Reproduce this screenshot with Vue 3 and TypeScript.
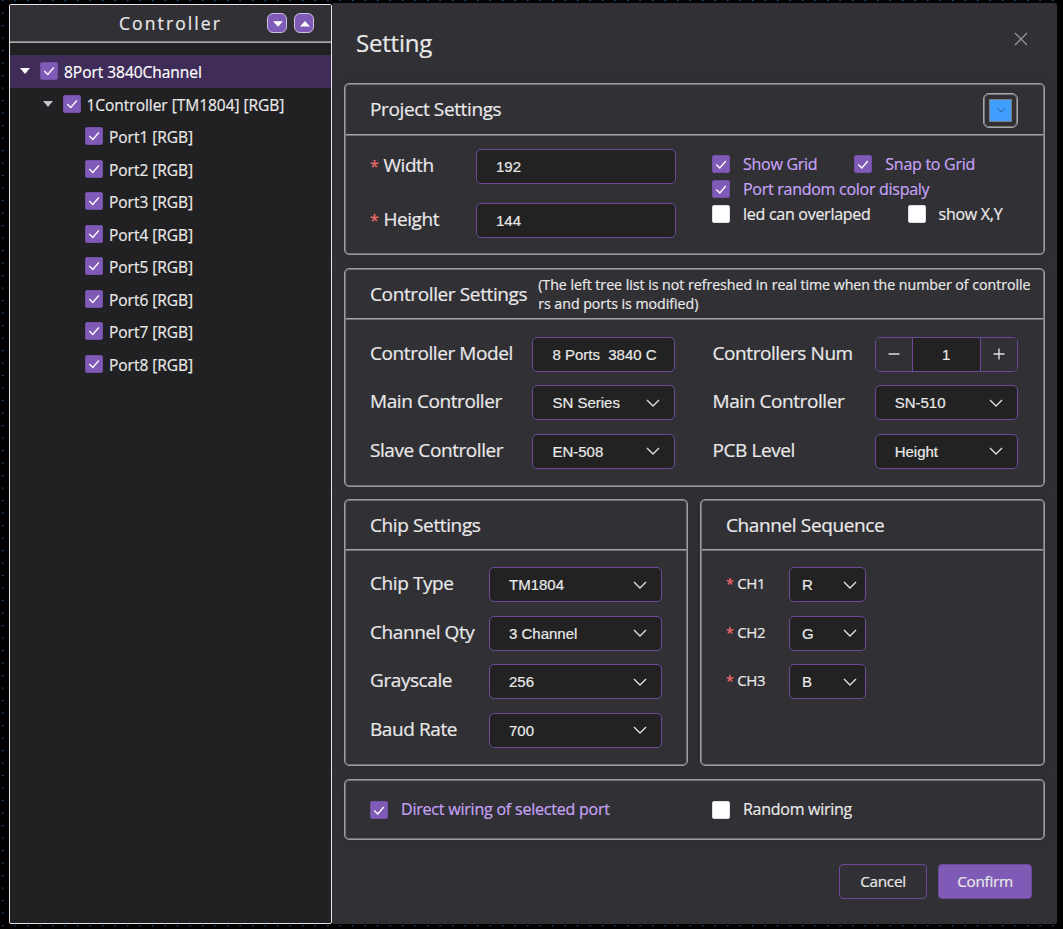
<template>
  <div class="page">
    <!-- Controller tree -->
    <aside class="sidebar">
      <header class="sidebar-head">
        <h2>Controller</h2>
        <div class="head-buttons">
          <button class="mini-btn">
            <svg viewBox="0 0 20 20" width="20" height="20">
              <path d="M5 7.2h10l-5 5.6z" fill="#fff" />
            </svg>
          </button>
          <button class="mini-btn">
            <svg viewBox="0 0 20 20" width="20" height="20">
              <path d="M5 12.6h10l-5-5.6z" fill="#fff" />
            </svg>
          </button>
        </div>
      </header>

      <ul class="tree">
        <li
          v-for="node in nodes"
          :key="node.label"
          class="node"
          :class="[`node--level${node.level}`, { 'node--active': node.active }]"
        >
          <svg v-if="node.level < 3" class="caret" viewBox="0 0 10 6" width="10" height="6">
            <path d="M0 0h10L5 6z" fill="currentColor" />
          </svg>
          <span class="box box--on">
            <svg viewBox="0 0 18 18" width="18" height="18">
              <path d="M4.3 9l3.5 3.5 6-7" />
            </svg>
          </span>
          <span class="node-label">{{ node.label }}</span>
        </li>
      </ul>
    </aside>

    <!-- Settings dialog -->
    <main class="dialog">
      <header class="dialog-head">
        <h1>Setting</h1>
        <svg class="close" viewBox="0 0 14 14" width="14" height="14">
          <path d="M1 1l12 12M13 1L1 13" />
        </svg>
      </header>

      <section class="card card--project">
        <div class="card-head">
          <h3>Project Settings</h3>
          <button class="toggle">
            <span class="toggle-inner">
              <svg viewBox="0 0 10 6" width="10" height="6"><path d="M1 1l4 4 4-4" /></svg>
            </span>
          </button>
        </div>
        <div class="project-body">
          <div class="size-fields">
            <div v-for="f in sizeFields" :key="f.label" class="size-row">
              <label class="label"><i class="star">*</i>{{ f.label }}</label>
              <div class="control">{{ f.value }}</div>
            </div>
          </div>
          <div class="checks">
            <div v-for="(row, i) in checkRows" :key="i" class="check-row">
              <label v-for="c in row" :key="c.label" class="check" :class="{ 'check--on': c.on }">
                <span class="box" :class="{ 'box--on': c.on }">
                  <svg v-if="c.on" viewBox="0 0 18 18" width="18" height="18">
                    <path d="M4.3 9.5l3.5 3.5 6-7" />
                  </svg>
                </span>
                <span>{{ c.label }}</span>
              </label>
            </div>
          </div>
        </div>
      </section>

      <section class="card card--controller">
        <div class="card-head">
          <h3>Controller Settings</h3>
          <p class="hint">
            (The left tree list is not refreshed in real time when the number of controlle<br />rs and
            ports is modified)
          </p>
        </div>
        <div class="controller-body">
          <div v-for="f in controllerFields" :key="f.id" class="field">
            <label class="label">{{ f.label }}</label>
            <div v-if="f.kind === 'number'" class="control stepper">
              <span class="step">
                <svg viewBox="0 0 12 12" width="12" height="12"><path d="M0.5 6h11" /></svg>
              </span>
              <span class="step-value">{{ f.value }}</span>
              <span class="step">
                <svg viewBox="0 0 12 12" width="12" height="12"><path d="M0.5 6h11M6 0.5v11" /></svg>
              </span>
            </div>
            <div v-else class="control">
              <span class="value">{{ f.value }}</span>
              <svg v-if="f.kind === 'select'" class="chevron" viewBox="0 0 14 8" width="14" height="8">
                <path d="M1 1l6 6 6-6" />
              </svg>
            </div>
          </div>
        </div>
      </section>

      <div class="split">
        <section class="card card--chip">
          <div class="card-head"><h3>Chip Settings</h3></div>
          <div class="rows">
            <div v-for="f in chipFields" :key="f.label" class="field">
              <label class="label">{{ f.label }}</label>
              <div class="control">
                <span class="value">{{ f.value }}</span>
                <svg class="chevron" viewBox="0 0 14 8" width="14" height="8">
                  <path d="M1 1l6 6 6-6" />
                </svg>
              </div>
            </div>
          </div>
        </section>

        <section class="card card--channel">
          <div class="card-head"><h3>Channel Sequence</h3></div>
          <div class="rows">
            <div v-for="f in channels" :key="f.label" class="field">
              <label class="label label--small"><i class="star">*</i>{{ f.label }}</label>
              <div class="control">
                <span class="value">{{ f.value }}</span>
                <svg class="chevron" viewBox="0 0 14 8" width="14" height="8">
                  <path d="M1 1l6 6 6-6" />
                </svg>
              </div>
            </div>
          </div>
        </section>
      </div>

      <section class="card card--wiring">
        <label class="check check--on">
          <span class="box box--on">
            <svg viewBox="0 0 18 18" width="18" height="18"><path d="M4.3 9.5l3.5 3.5 6-7" /></svg>
          </span>
          <span class="check-text">Direct wiring of selected port</span>
        </label>
        <label class="check">
          <span class="box"></span>
          <span class="check-text">Random wiring</span>
        </label>
      </section>

      <footer class="actions">
        <button class="btn btn--cancel">Cancel</button>
        <button class="btn btn--confirm">Confirm</button>
      </footer>
    </main>
  </div>
</template>

<script setup lang="ts">
interface TreeNode {
  label: string
  level: 1 | 2 | 3
  active?: boolean
}

interface Check {
  label: string
  on: boolean
}

interface Field {
  id: string
  label: string
  value: string
  kind: 'text' | 'select' | 'number'
}

const ports: TreeNode[] = Array.from({ length: 8 }, (_, i) => ({
  label: `Port${i + 1} [RGB]`,
  level: 3,
}))

const nodes: TreeNode[] = [
  { label: '8Port 3840Channel', level: 1, active: true },
  { label: '1Controller [TM1804] [RGB]', level: 2 },
  ...ports,
]

const sizeFields = [
  { label: 'Width', value: '192' },
  { label: 'Height', value: '144' },
]

const checkRows: Check[][] = [
  [
    { label: 'Show Grid', on: true },
    { label: 'Snap to Grid', on: true },
  ],
  [{ label: 'Port random color dispaly', on: true }],
  [
    { label: 'led can overlaped', on: false },
    { label: 'show X,Y', on: false },
  ],
]

const controllerFields: Field[] = [
  { id: 'model', label: 'Controller Model', value: '8 Ports  3840 C', kind: 'text' },
  { id: 'count', label: 'Controllers Num', value: '1', kind: 'number' },
  { id: 'series', label: 'Main Controller', value: 'SN Series', kind: 'select' },
  { id: 'main', label: 'Main Controller', value: 'SN-510', kind: 'select' },
  { id: 'slave', label: 'Slave Controller', value: 'EN-508', kind: 'select' },
  { id: 'pcb', label: 'PCB Level', value: 'Height', kind: 'select' },
]

const chipFields = [
  { label: 'Chip Type', value: 'TM1804' },
  { label: 'Channel Qty', value: '3 Channel' },
  { label: 'Grayscale', value: '256' },
  { label: 'Baud Rate', value: '700' },
]

const channels = [
  { label: 'CH1', value: 'R' },
  { label: 'CH2', value: 'G' },
  { label: 'CH3', value: 'B' },
]
</script>

<style>
body {
  background: #000;
}
</style>

<style scoped>
* {
  box-sizing: border-box;
}

.page {
  display: flex;
  width: 1063px;
  height: 929px;
  overflow: hidden;
  padding: 3px 0 0 9px;
  background-color: #000;
  background-image: radial-gradient(circle at 2.5px 0.5px, #164a78 0.8px, transparent 1.1px);
  background-size: 12.5px 12.5px;
  font-family: 'Open Sans', 'Noto Sans', sans-serif;
  font-weight: 500;
  color: #e9e9e9;
  -webkit-text-stroke: 0.2px currentColor;
}

h1,
h2,
h3,
p,
ul {
  margin: 0;
  padding: 0;
  font-weight: 500;
}

button {
  padding: 0;
  font: inherit;
  color: inherit;
}

/* ── Sidebar ── */
.sidebar {
  width: 323px;
  height: 920px;
  margin-top: 1px;
  border: 1px solid #e4e4e6;
  border-radius: 2px;
  background: #212123;
}

.sidebar-head {
  display: flex;
  align-items: center;
  height: 38px;
  padding: 0 0 1px 109px;
  background: #313035;
  border-bottom: 1px solid #a8a8aa;
  box-shadow: inset 0 -1px #828286;
}

h2 {
  width: 148px;
  font-size: 17.5px;
  line-height: 36px;
  letter-spacing: 2.1px;
  white-space: nowrap;
}

.head-buttons {
  display: flex;
  gap: 7px;
}

.mini-btn {
  display: grid;
  place-items: center;
  width: 20px;
  height: 20px;
  border: 1px solid #cbbfdc;
  border-radius: 6px;
  background: #7f5ab6;
}

.mini-btn svg {
  display: block;
}

.tree {
  padding-top: 12px;
  list-style: none;
}

.node {
  display: flex;
  align-items: center;
  height: 32.5px;
  font-size: 15.5px;
  white-space: nowrap;
}

.node--level1 {
  padding-left: 10px;
}

.node--level2 {
  padding-left: 32.5px;
}

.node--level3 {
  padding-left: 75px;
}

.node--active {
  background: #3f2c59;
  color: #fff;
}

.caret {
  margin-right: 10px;
  color: #c0c4cc;
}

.node--active .caret {
  color: #fff;
}

.node-label {
  margin-left: 6px;
  padding-top: 1.5px;
  letter-spacing: -0.03px;
}

.box {
  display: block;
  flex: none;
  width: 18px;
  height: 18px;
  border: 1px solid #dcdfe6;
  border-radius: 2px;
  background: #fff;
}

.box svg {
  display: block;
  margin: -1px;
}

.box path {
  fill: none;
  stroke: #fff;
  stroke-width: 1.3;
}

.box--on {
  border-color: #7350a6;
  background: #7f5ab6;
}

/* ── Dialog ── */
.dialog {
  width: 725px;
  height: 921px;
  padding: 0 12px;
  border-radius: 2px;
  background: #313035;
}

.dialog-head {
  display: flex;
  justify-content: space-between;
  height: 80px;
  padding: 22px 17px 0 12px;
}

h1 {
  font-size: 24px;
  line-height: 36px;
  letter-spacing: -0.2px;
}

.close {
  margin-top: 7px;
}

.close path {
  stroke: #909399;
  stroke-width: 1.3;
}

.card {
  padding: 1px;
  border: 1px solid #9d9da1;
  border-radius: 5px;
  box-shadow:
    inset 0 0 0 1px #727176,
    0 0 12px rgba(0, 0, 0, 0.12);
}

.card-head {
  display: flex;
  align-items: center;
  height: 50px;
  padding: 0 0 3px 24px;
  box-shadow:
    inset 0 -1px #727176,
    inset 0 -2px #a3a3a7;
}

h3 {
  font-size: 19px;
  line-height: 28px;
  letter-spacing: -0.38px;
  white-space: nowrap;
}

.label {
  font-size: 19px;
  line-height: 28px;
  letter-spacing: -0.42px;
  white-space: nowrap;
}

.star {
  margin-right: 5px;
  font-size: 16px;
  font-style: normal;
  color: #f56c6c;
}

.control {
  display: flex;
  align-items: center;
  justify-content: space-between;
  height: 35px;
  padding: 0 14px 0 19px;
  border: 1px solid #6b4a99;
  border-radius: 5px;
  background: #222222;
  font-family: 'Liberation Sans', Arial, sans-serif;
  font-size: 15px;
  font-weight: 400;
  white-space: pre;
}

.chevron {
  flex: none;
}

.chevron path,
.step path {
  fill: none;
  stroke: #dedede;
  stroke-width: 1.4;
}

.field {
  display: flex;
  height: 35px;
}

/* Project */
.card--project {
  height: 172px;
}

.card--project .card-head {
  height: 51px;
  justify-content: space-between;
  padding-right: 25px;
}

.toggle {
  display: grid;
  place-items: center;
  width: 35px;
  height: 35px;
  margin-top: 2px;
  border: 1px solid #a8a8ac;
  border-radius: 6px;
  background: #313035;
  box-shadow: inset 0 0 0 1px #77767b;
}

.toggle-inner {
  display: grid;
  place-items: center;
  width: 23px;
  height: 23px;
  border: 1px solid #7b7d83;
  background: #409eff;
}

.toggle path {
  fill: none;
  stroke: #2f6299;
}

.project-body {
  display: flex;
}

.size-fields {
  display: flex;
  flex-direction: column;
  gap: 19px;
  width: 366px;
  padding: 13px 0 0 24px;
}

.size-row {
  display: flex;
}

.size-row .label {
  width: 106px;
  padding-top: 2px;
}

.size-row .control {
  width: 200px;
}

.checks {
  padding-top: 15.5px;
}

.check-row {
  display: flex;
  height: 25px;
}

.check-row .check + .check {
  margin-left: 37px;
}

.check {
  display: flex;
  align-items: center;
  height: 25px;
  gap: 13px;
  font-size: 16px;
  letter-spacing: -0.27px;
  white-space: nowrap;
}

.check-text {
  padding-bottom: 1px;
}

.check--on {
  color: #c6a3f5;
}

/* Controller */
.card--controller {
  height: 219px;
  margin-top: 13px;
}

.card--controller h3 {
  padding-top: 1px;
}

.hint {
  margin-left: 11px;
  padding-top: 1px;
  font-size: 14.2px;
  line-height: 19px;
  letter-spacing: -0.03px;
  white-space: nowrap;
}

.controller-body {
  display: grid;
  grid-template-columns: 342.5px 305px;
  row-gap: 13.6px;
  padding: 16.8px 0 0 24px;
}

.controller-body .label {
  width: 162.4px;
  padding-top: 2px;
}

.controller-body .control {
  width: 143px;
}

.controller-body .stepper {
  padding: 0;
  overflow: hidden;
}

.step {
  display: grid;
  place-items: center;
  width: 36px;
  height: 33px;
  background: #313035;
}

.step-value {
  flex: 1;
  height: 33px;
  border: solid #6b4a99;
  border-width: 0 1px;
  line-height: 34px;
  text-align: center;
}

/* Chip / channel */
.split {
  display: flex;
  gap: 12px;
  margin-top: 12px;
}

.split .card {
  height: 267px;
}

.card--chip {
  width: 344px;
}

.card--channel {
  width: 345px;
}

.rows {
  display: flex;
  flex-direction: column;
  gap: 13.6px;
  padding: 16px 0 0 24px;
}

.card--chip .label {
  width: 119px;
  padding-top: 2px;
}

.card--chip .control {
  width: 173px;
}

.card--channel .label {
  width: 63px;
  padding-top: 2px;
  font-size: 15px;
  letter-spacing: -0.4px;
}

.card--channel .control {
  width: 77px;
  padding-left: 12px;
  padding-right: 8px;
}

.label--small .star {
  margin-right: 4px;
  font-size: 14px;
}

/* Wiring */
.card--wiring {
  display: flex;
  align-items: center;
  height: 61px;
  margin-top: 13px;
  padding-left: 25px;
}

.card--wiring .check:first-child {
  width: 342px;
  letter-spacing: -0.21px;
}

.actions {
  display: flex;
  justify-content: flex-end;
  gap: 11px;
  margin-top: 24px;
  padding-right: 13px;
}

.btn {
  height: 35px;
  padding-bottom: 1px;
  border: 1px solid #6b4a99;
  border-radius: 4px;
  background: transparent;
  font-size: 15.3px;
  letter-spacing: -0.3px;
}

.btn--cancel {
  width: 88px;
}

.btn--confirm {
  width: 94px;
  background: #7f5ab6;
}
</style>
